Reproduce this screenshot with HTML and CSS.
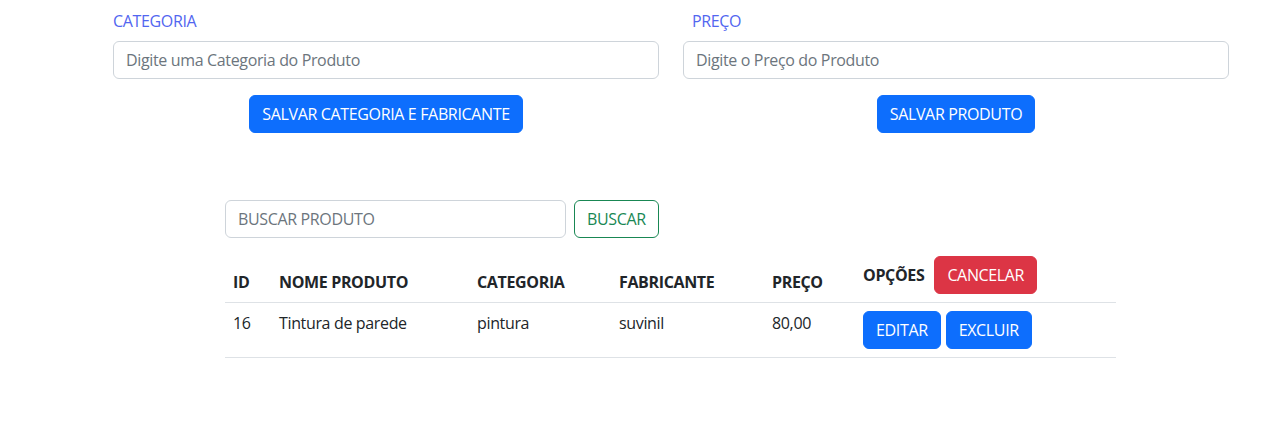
FILE: index.html
```html
<!DOCTYPE html>
<html lang="pt-BR">
<head>
<meta charset="utf-8">
<title>Produtos</title>
<link rel="stylesheet" href="styles.css">
</head>
<body>
<div class="page">
  <section class="forms">
    <div class="field">
      <label class="label" for="cat">CATEGORIA</label>
      <input class="input" id="cat" type="text" placeholder="Digite uma Categoria do Produto">
      <div class="actions"><button class="btn btn-primary">SALVAR CATEGORIA E FABRICANTE</button></div>
    </div>
    <div class="field">
      <label class="label label-indent" for="preco">PREÇO</label>
      <input class="input" id="preco" type="text" placeholder="Digite o Preço do Produto">
      <div class="actions"><button class="btn btn-primary">SALVAR PRODUTO</button></div>
    </div>
  </section>

  <section class="list">
    <div class="search">
      <input class="input search-input" type="text" placeholder="BUSCAR PRODUTO">
      <button class="btn btn-outline-success">BUSCAR</button>
    </div>
    <table class="table">
      <thead>
        <tr>
          <th class="c-id">ID</th>
          <th class="c-nome">NOME PRODUTO</th>
          <th class="c-cat">CATEGORIA</th>
          <th class="c-fab">FABRICANTE</th>
          <th class="c-preco">PREÇO</th>
          <th class="c-opc"><span class="opc">OPÇÕES <button class="btn btn-danger">CANCELAR</button></span></th>
        </tr>
      </thead>
      <tbody>
        <tr>
          <td>16</td>
          <td>Tintura de parede</td>
          <td>pintura</td>
          <td>suvinil</td>
          <td>80,00</td>
          <td><div class="row-actions"><button class="btn btn-primary">EDITAR</button><button class="btn btn-primary">EXCLUIR</button></div></td>
        </tr>
      </tbody>
    </table>
  </section>
</div>
</body>
</html>
```

FILE: styles.css
```css
* { box-sizing: border-box; }

body {
  margin: 0;
  background: #fff;
  color: #212529;
  font-family: "Open Sans", "Noto Sans", sans-serif;
  font-size: 16px;
  line-height: 24px;
  letter-spacing: -0.35px;
}

.page {
  padding: 9px 41px 0 113px;
}

.forms {
  display: grid;
  grid-template-columns: 546px 546px;
  column-gap: 24px;
}

.field {
  display: flex;
  flex-direction: column;
}

.label {
  color: #5266f0;
  margin-bottom: 8px;
  line-height: 24px;
}

.label-indent { padding-left: 9px; }

.input {
  display: block;
  width: 100%;
  height: 38px;
  padding: 6px 12px;
  font: inherit;
  letter-spacing: inherit;
  color: #212529;
  background: #fff;
  border: 1px solid #ced4da;
  border-radius: 6px;
  outline: none;
}

.input::placeholder { color: #6c757d; opacity: 1; }

.actions {
  display: flex;
  justify-content: center;
  margin-top: 16px;
}

.btn {
  display: inline-block;
  height: 38px;
  padding: 6px 12px;
  font: inherit;
  letter-spacing: inherit;
  line-height: 24px;
  border: 1px solid transparent;
  border-radius: 6px;
  cursor: pointer;
  white-space: nowrap;
}

.btn-primary { background: #0d6efd; border-color: #0d6efd; color: #fff; }
.btn-danger { background: #dc3545; border-color: #dc3545; color: #fff; }
.btn-outline-success { background: #fff; border-color: #198754; color: #198754; }

.list {
  margin-top: 67px;
  margin-left: 112px;
  width: 891px;
}

.search {
  display: flex;
  gap: 8px;
}

.search-input { width: 341px; }

.table {
  width: 891px;
  margin-top: 10px;
  border-collapse: collapse;
}

.table th,
.table td {
  padding: 8px;
  text-align: left;
  border-bottom: 1px solid #dee2e6;
}

.table th { font-weight: 700; vertical-align: bottom; }
.table td { vertical-align: top; }

.c-id { width: 46px; }
.c-nome { width: 198px; }
.c-cat { width: 142px; }
.c-fab { width: 153px; }
.c-preco { width: 91px; }

.opc {
  display: flex;
  align-items: baseline;
  gap: 10px;
}

.opc .btn { font-weight: 400; }

.row-actions {
  display: flex;
  gap: 5px;
}
```
